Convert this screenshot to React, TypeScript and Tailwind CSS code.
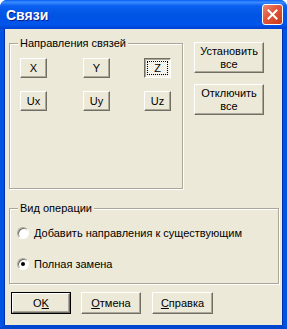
import React from "react";

const face = "bg-[#ECE9D8]";

function Btn({
  children,
  className = "",
  pressed = false,
}: {
  children: React.ReactNode;
  className?: string;
  pressed?: boolean;
}) {
  if (pressed) {
    return (
      <div
        className={`flex items-center justify-center border border-t-[#716F64] border-l-[#716F64] border-b-white border-r-white shadow-[inset_1px_1px_0_#ACA899] bg-[image:repeating-conic-gradient(#ffffff_0%_25%,#ECE9D8_0%_50%)] bg-[length:2px_2px] ${className}`}
      >
        {children}
      </div>
    );
  }
  return (
    <div
      className={`flex items-center justify-center border border-t-white border-l-white border-b-[#716F64] border-r-[#716F64] shadow-[inset_-1px_-1px_0_#ACA899] ${face} ${className}`}
    >
      {children}
    </div>
  );
}

function Group({
  label,
  className = "",
  children,
}: {
  label: string;
  className?: string;
  children: React.ReactNode;
}) {
  return (
    <div
      className={`relative border border-[#ACA899] shadow-[inset_1px_1px_0_#ffffff,1px_1px_0_#ffffff] ${className}`}
    >
      <span className="absolute left-[8px] top-[-7px] bg-[#ECE9D8] px-[2px] text-[11px] leading-[13px] text-black">
        {label}
      </span>
      {children}
    </div>
  );
}

function Radio({ checked }: { checked?: boolean }) {
  return (
    <div className="flex h-[12px] w-[12px] items-center justify-center rounded-full border border-t-[#ACA899] border-l-[#ACA899] border-b-white border-r-white bg-white shadow-[inset_1px_1px_0_#716F64]">
      {checked && <div className="h-[4px] w-[4px] rounded-full bg-black" />}
    </div>
  );
}

export default function App() {
  return (
    <div
      className="flex h-[329px] w-[287px] flex-col overflow-hidden rounded-t-[7px] bg-[#0054E3] text-black"
      style={{ fontFamily: '"Liberation Sans", Arial, sans-serif' }}
    >
      {/* Title bar */}
      <div className="flex h-[29px] shrink-0 items-center justify-between bg-[linear-gradient(to_bottom,#0A5FF5_0%,#3A8CFF_8%,#0A5FF0_20%,#0054E3_55%,#0055EB_85%,#0040D0_100%)] pl-[6px] pr-[4px]">
        <span className="text-[14px] font-bold leading-none text-white [text-shadow:1px_1px_0_#0A1E8A]">
          Связи
        </span>
        <div className="flex h-[21px] w-[21px] items-center justify-center rounded-[3px] border border-white bg-[linear-gradient(135deg,#E98A6C_0%,#E0553A_45%,#C8391A_100%)]">
          <svg width="11" height="11" viewBox="0 0 11 11">
            <path
              d="M1.5 1.5 L9.5 9.5 M9.5 1.5 L1.5 9.5"
              stroke="white"
              strokeWidth="2"
              strokeLinecap="square"
            />
          </svg>
        </div>
      </div>

      {/* Frame + body */}
      <div className="flex flex-1 flex-col border-x-[4px] border-b-[4px] border-x-[#0054E3] border-b-[#0047D0]">
        <div className={`flex flex-1 flex-col ${face} text-[11px] leading-[13px] shadow-[inset_1px_0_0_#0030B0,inset_-1px_0_0_#0030B0]`}>
          {/* top row */}
          <div className="flex items-start pt-[13px]">
            <Group label="Направления связей" className="ml-[5px] mt-[1px] h-[146px] w-[174px]">
              <div className="flex pt-[14px]">
                <Btn className="ml-[10px] h-[20px] w-[27px]">X</Btn>
                <Btn className="ml-[36px] h-[20px] w-[27px]">Y</Btn>
                <Btn pressed className="ml-[34px] h-[20px] w-[27px]">
                  <span className="flex h-[14px] w-[21px] items-center justify-center border border-dotted border-black">
                    Z
                  </span>
                </Btn>
              </div>
              <div className="flex pt-[13px]">
                <Btn className="ml-[10px] h-[20px] w-[27px]">Ux</Btn>
                <Btn className="ml-[36px] h-[20px] w-[27px]">Uy</Btn>
                <Btn className="ml-[34px] h-[20px] w-[27px]">Uz</Btn>
              </div>
            </Group>
            <div className="ml-[11px] flex flex-col gap-[11px]">
              <Btn className="h-[31px] w-[70px] flex-col leading-[13px]">
                <span>Установить</span>
                <span>все</span>
              </Btn>
              <Btn className="h-[31px] w-[70px] flex-col leading-[13px]">
                <span>Отключить</span>
                <span>все</span>
              </Btn>
            </div>
          </div>

          {/* bottom group */}
          <Group label="Вид операции" className="ml-[5px] mt-[19px] h-[76px] w-[270px]">
            <div className="flex flex-col pl-[7px] pt-[17px]">
              <div className="flex h-[14px] items-center gap-[5px]">
                <Radio />
                <span>Добавить направления к существующим</span>
              </div>
              <div className="mt-[17px] flex h-[14px] items-center gap-[5px]">
                <Radio checked />
                <span>Полная замена</span>
              </div>
            </div>
          </Group>

          {/* buttons */}
          <div className="mt-[8px] flex pl-[7px]">
            <div className="border border-black">
              <Btn className="h-[20px] w-[58px]">
                <span>
                  O<u>K</u>
                </span>
              </Btn>
            </div>
            <Btn className="ml-[10px] h-[22px] w-[60px]">
              <span>
                <u>О</u>тмена
              </span>
            </Btn>
            <Btn className="ml-[11px] h-[22px] w-[61px]">
              <span>
                <u>С</u>правка
              </span>
            </Btn>
          </div>
        </div>
      </div>
    </div>
  );
}
